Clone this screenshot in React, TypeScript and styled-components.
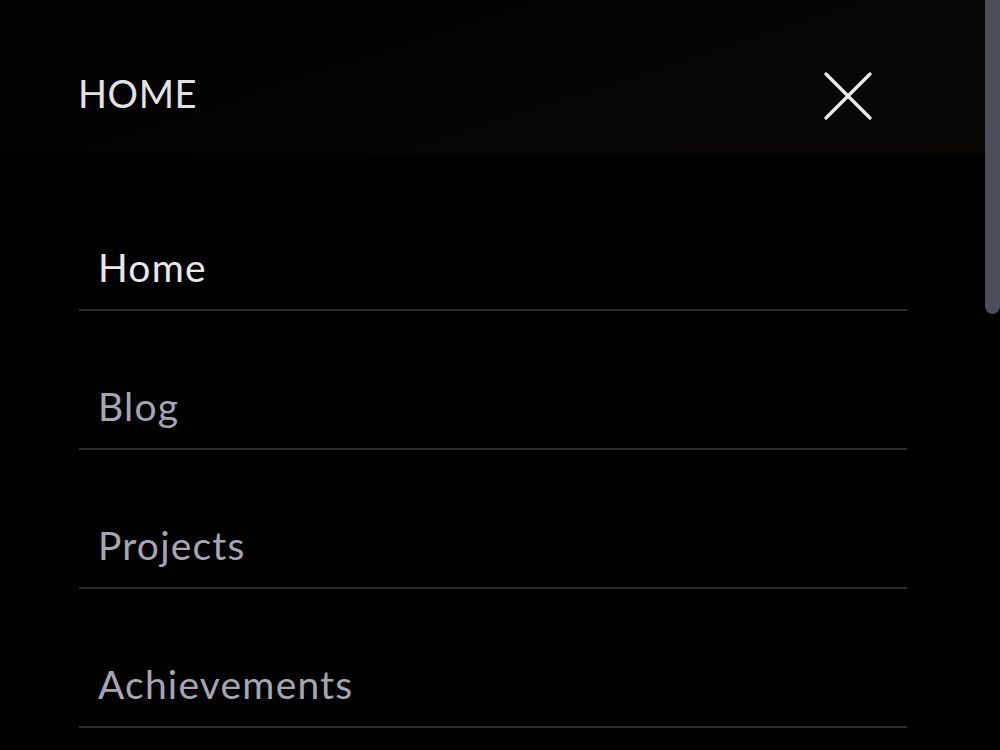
import React from "react";
import styled, { createGlobalStyle } from "styled-components";

const GlobalStyle = createGlobalStyle`
  html, body {
    margin: 0;
    padding: 0;
    background: #010101;
    overflow: hidden;
  }
  body {
    font-family: "Lato", "Noto Sans", sans-serif;
    -webkit-font-smoothing: antialiased;
  }
`;

const Page = styled.div`
  width: 1000px;
  height: 750px;
  background: #010101;
  position: relative;
  overflow: hidden;
`;

const Header = styled.header`
  height: 153px;
  box-sizing: border-box;
  padding: 70px 128px 0 78px;
  display: flex;
  justify-content: space-between;
  align-items: flex-start;
  background: linear-gradient(
    162deg,
    #020202 0%,
    #030303 35%,
    #070606 65%,
    #080505 100%
  );
`;

const Title = styled.div`
  font-size: 38px;
  line-height: 46px;
  letter-spacing: 0.6px;
  color: #e2e2e4;
  font-weight: 400;
`;

const CloseButton = styled.button`
  width: 48px;
  height: 48px;
  margin-top: 2px;
  padding: 0;
  border: none;
  background: transparent;
  display: flex;
  align-items: center;
  justify-content: center;
  cursor: pointer;
`;

const Nav = styled.nav`
  padding: 19px 93px 0 79px;
  display: flex;
  flex-direction: column;
`;

const Item = styled.a<{ $active?: boolean }>`
  display: block;
  box-sizing: border-box;
  height: 139px;
  border-bottom: 2px solid #2d2d31;
  padding-left: 19px;
  padding-top: 72px;
  font-size: 39px;
  line-height: 46px;
  letter-spacing: 1.2px;
  color: ${(p) => (p.$active ? "#e8e8ea" : "#a6a5b4")};
  text-decoration: none;
`;

const ScrollThumb = styled.div`
  position: absolute;
  top: 0;
  right: 0;
  width: 15px;
  height: 314px;
  background: #4b4d5a;
  border-radius: 0 0 8px 8px;
`;

const items = [
  { label: "Home", active: true },
  { label: "Blog" },
  { label: "Projects" },
  { label: "Achievements" },
];

export default function App() {
  return (
    <>
      <GlobalStyle />
      <Page>
        <Header>
          <Title>HOME</Title>
          <CloseButton aria-label="Close menu">
            <svg width="48" height="48" viewBox="0 0 48 48">
              <path
                d="M2 2 L46 46 M46 2 L2 46"
                stroke="#f2f2f2"
                strokeWidth="3.2"
                strokeLinecap="round"
                fill="none"
              />
            </svg>
          </CloseButton>
        </Header>
        <Nav>
          {items.map((it) => (
            <Item key={it.label} href="#" $active={it.active}>
              {it.label}
            </Item>
          ))}
        </Nav>
        <ScrollThumb />
      </Page>
    </>
  );
}
